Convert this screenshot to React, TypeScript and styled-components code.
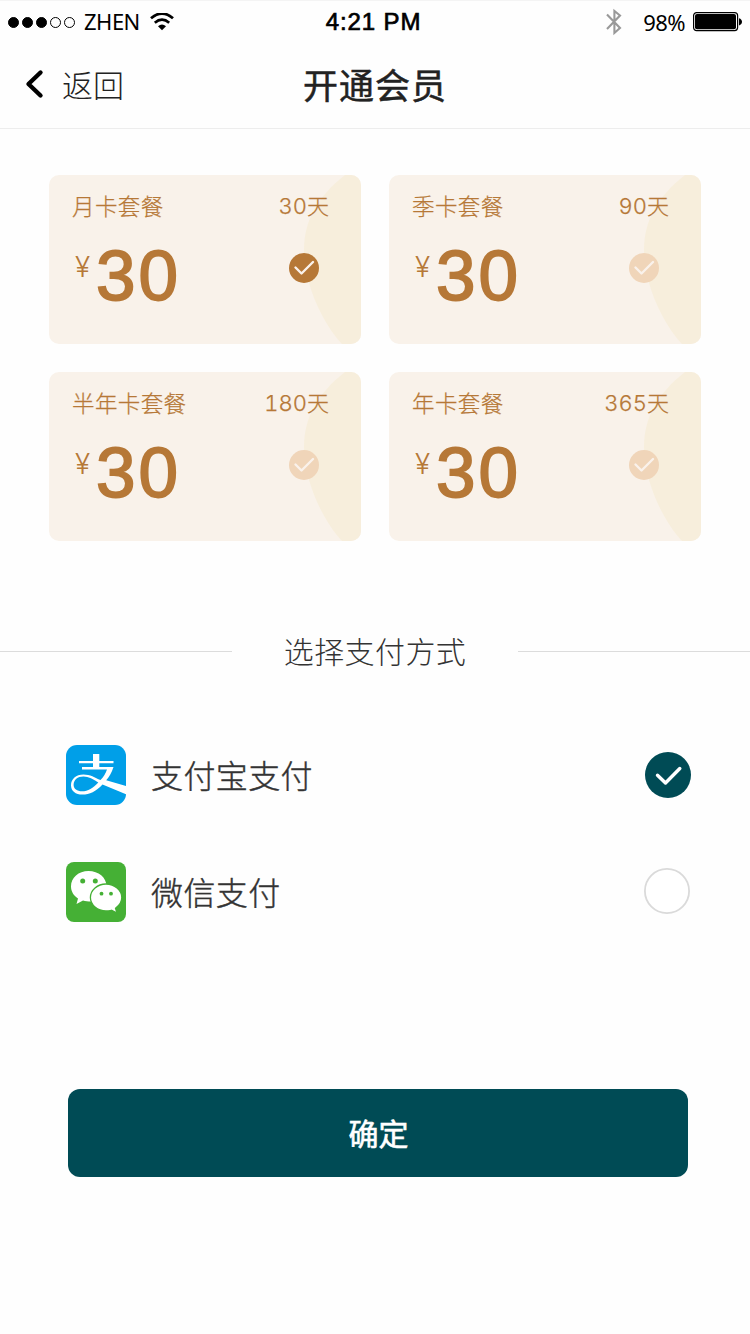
import React, { useState } from "react";
import styled, { createGlobalStyle } from "styled-components";

const CJK = '"Noto Sans CJK SC", sans-serif';

const GlobalStyle = createGlobalStyle`
  * { box-sizing: border-box; }
  body { margin: 0; background: #fefefe; font-family: ${CJK}; }
  button { font: inherit; border: 0; padding: 0; background: none; cursor: pointer; text-align: left; }
`;

const Screen = styled.div`
  width: 750px;
  height: 1334px;
  overflow: hidden;
  border-top: 1px solid #f4f4f4;
`;

const StatusBar = styled.div`
  display: grid;
  grid-template-columns: 1fr auto 1fr;
  align-items: center;
  height: 42px;
  padding: 0 8px;
  color: #000;
`;

const StatusGroup = styled.div<{ $end?: boolean }>`
  display: flex;
  align-items: center;
  justify-content: ${(p) => (p.$end ? "flex-end" : "flex-start")};
`;

const Signal = styled.div`
  display: flex;
  gap: 3px;
  margin-right: 9px;
`;

const SignalDot = styled.i<{ $on: boolean }>`
  width: 11px;
  height: 11px;
  border-radius: 50%;
  border: 1px solid #000;
  background: ${(p) => (p.$on ? "#000" : "transparent")};
`;

const Carrier = styled.span`
  margin-right: 10px;
  padding-bottom: 2px;
  font: 400 22px/28px "Noto Sans", sans-serif;
  letter-spacing: -0.5px;
`;

const BatteryLevel = styled.span`
  margin: 0 8px 0 21px;
  padding-bottom: 1px;
  font: 400 22px/28px "Noto Sans", sans-serif;
  letter-spacing: -0.6px;
`;

const Clock = styled.span`
  font: 400 24px/28px "Liberation Sans", Arial, sans-serif;
  letter-spacing: 0.9px;
  margin-right: 3px;
  -webkit-text-stroke: 0.7px #000;
`;

const NavBar = styled.header`
  display: grid;
  grid-template-columns: 1fr auto 1fr;
  align-items: center;
  height: 86px;
  padding-bottom: 3px;
  border-bottom: 1px solid #ededed;
`;

const BackButton = styled.button`
  display: flex;
  align-items: center;
  gap: 18px;
  padding-left: 25px;
  color: #222;
  font-size: 31px;
  font-weight: 300;
  line-height: 40px;
`;

const NavTitle = styled.h1`
  margin: 0;
  font-size: 35px;
  font-weight: 400;
  line-height: 44px;
  letter-spacing: 1px;
  color: #222;
  -webkit-text-stroke: 0.5px #222;
`;

const PlanGrid = styled.section`
  display: grid;
  grid-template-columns: 312px 312px;
  gap: 28px;
  padding: 46px 49px 0;
`;

const PlanCard = styled.button`
  position: relative;
  display: flex;
  flex-direction: column;
  height: 169px;
  padding: 17px 31px 0 23px;
  border-radius: 10px;
  overflow: hidden;
  background: #f9f2ea;
  color: #b67837;
`;

const PlanGlow = styled.svg`
  position: absolute;
  top: 0;
  right: 0;
`;

const PlanRow = styled.div`
  position: relative;
  display: flex;
  justify-content: space-between;
  width: 100%;
`;

const PlanLabel = styled.span`
  font-family: ${CJK};
  font-size: 22.5px;
  font-weight: 300;
  line-height: 26px;
  letter-spacing: 0.4px;
  -webkit-text-stroke: 0.25px #b67837;
`;

const PlanDays = styled(PlanLabel)`
  margin-right: 1px;
  font-family: Inter, ${CJK};
  font-size: 22px;
  font-feature-settings: "tnum";
  line-height: 28px;
  letter-spacing: 0;
`;

const Price = styled.div`
  display: flex;
  align-items: flex-start;
  margin-top: 10px;
`;

const Currency = styled.span`
  width: 24px;
  padding: 19px 0 0 3px;
  font-family: Inter, sans-serif;
  font-size: 28px;
  font-weight: 300;
  line-height: 36px;
`;

const Amount = styled.span`
  font-family: "Liberation Sans", Arial, sans-serif;
  font-size: 71px;
  line-height: 91px;
  letter-spacing: 3px;
  -webkit-text-stroke: 1.8px #b67837;
`;

const PlanMark = styled.svg<{ $active: boolean }>`
  margin: 33px 11px 0 0;
  circle { fill: ${(p) => (p.$active ? "#b67837" : "#f0d5b9")}; }
`;

const SectionTitle = styled.div`
  display: flex;
  align-items: center;
  justify-content: space-between;
  margin-top: 88px;
  height: 44px;
  color: #333;
  font-size: 30px;
  font-weight: 300;
  letter-spacing: 0.4px;
  &::before, &::after {
    content: "";
    width: 232px;
    height: 1px;
    background: #dcdcdc;
  }
`;

const SectionLabel = styled.span`
  padding-bottom: 3px;
`;

const Methods = styled.section`
  display: flex;
  flex-direction: column;
  gap: 57px;
  padding: 72px 59px 0 66px;
`;

const MethodRow = styled.button`
  display: flex;
  align-items: center;
  height: 60px;
`;

const MethodName = styled.span`
  flex: 1;
  margin-left: 25px;
  padding-bottom: 3px;
  font-size: 32px;
  font-weight: 300;
  line-height: 44px;
  letter-spacing: 0.4px;
  color: #333;
  -webkit-text-stroke: 0.4px #333;
`;

const RadioSlot = styled.span<{ $on: boolean }>`
  display: flex;
  padding: ${(p) => (p.$on ? "0" : "0 1px 2px 0")};
`;

const Confirm = styled.button`
  display: block;
  width: 620px;
  height: 88px;
  margin: 167px 0 0 68px;
  padding: 0 0 3px 1px;
  border-radius: 12px;
  background: #004b55;
  color: #fff;
  font-size: 30px;
  font-weight: 400;
  text-align: center;
  -webkit-text-stroke: 0.6px #fff;
`;

const WifiIcon = () => (
  <svg width="24" height="19" viewBox="0 0 24 19">
    <path d="M1 5.300Q12-4.200 23 5.300" fill="none" stroke="#000" strokeWidth="2.8" />
    <path d="M4.800 9.800Q12 3.600 19.200 9.800" fill="none" stroke="#000" strokeWidth="2.7" />
    <path d="M8 13.200Q12 10 16 13.200L12 17.200Z" />
  </svg>
);

const BluetoothIcon = () => (
  <svg width="16" height="28" viewBox="0 0 16 28">
    <path d="M1 6.500L14 20L8.400 25V3L14 7.500L1 21" fill="none" stroke="#999" strokeWidth="2.100" />
  </svg>
);

const BatteryIcon = () => (
  <svg width="49" height="20" viewBox="0 0 49 20">
    <rect x="0.6" y="0.6" width="44" height="18" rx="3" fill="none" stroke="#000" strokeWidth="1.2" />
    <rect x="2" y="2" width="41" height="15.2" rx="2" />
    <path d="M46 6.2q3 1 3 3.6t-3 3.6z" />
  </svg>
);

const BackIcon = () => (
  <svg width="19" height="30" viewBox="0 0 19 30">
    <path d="M15.500 3.500L3.500 15L15.500 26.500" fill="none" stroke="#000" strokeWidth="4.400" strokeLinecap="round" strokeLinejoin="round" />
  </svg>
);

const AlipayLogo = () => (
  <svg width="60" height="60" viewBox="0 0 60 60">
    <rect width="60" height="60" rx="11" fill="#009fe8" />
    <path d="M27 9h6.300v7H47.500v2.200H33.300V22H47.500C45.500 28 43 32 40.200 35.200L60 41V49.300L36.500 39.500C30 46.500 23.500 49.600 16.500 49.600C9.500 49.600 5 46 5 40.200C5 34 10 29.400 17.500 29.400C24 29.400 29 32.500 34.500 35C37.500 32 39.500 28.500 41 24.500H16V22H27V18.200H13V16H27Z" fill="#fff" />
    <path d="M32.300 37.500C27.500 34.500 22.500 31.600 17.500 31.600C11.500 31.600 7.600 35 7.600 39.800C7.600 44 11 46.300 16 46.300C22 46.300 27 43 32.300 37.500Z" fill="#009fe8" />
  </svg>
);

const WechatLogo = () => (
  <svg width="60" height="60" viewBox="0 0 60 60">
    <rect width="60" height="60" rx="8" fill="#45b035" />
    <path d="M22.500 9C12.500 9 5 15.800 5 24.300C5 29.500 7.500 33.500 12 36.500L10.500 42L17 38.500C19.500 39.300 22 39.500 25 39.500C34 39 40.500 32 40.500 24.300C40.500 15.500 32.500 9 22.500 9Z" fill="#fff" />
    <path d="M40 22C31.500 22 24.400 28 24.400 35.600C24.400 43 31.500 49 40 49C42 49 44 48.700 45.500 48.300L51 51L49.500 46.200C53.500 43.500 55.800 40 55.800 35.600C55.800 28 48.500 22 40 22Z" fill="#fff" stroke="#45b035" strokeWidth="1.300" />
    <g fill="#45b035">
      <circle cx="16.700" cy="19" r="2.500" />
      <circle cx="29.300" cy="19" r="2.500" />
      <circle cx="35.500" cy="31.700" r="1.900" />
      <circle cx="45" cy="31.700" r="1.900" />
    </g>
  </svg>
);

const Radio = ({ on }: { on: boolean }) => (
  <svg width="46" height="46" viewBox="0 0 46 46">
    {on ? (
      <>
        <circle cx="23" cy="23" r="23" fill="#004b55" />
        <path d="M12.500 23.200L20.500 31L34.800 16.500" fill="none" stroke="#fff" strokeWidth="3.400" strokeLinecap="round" strokeLinejoin="round" />
      </>
    ) : (
      <circle cx="23" cy="23" r="22.100" fill="#fff" stroke="#dadada" strokeWidth="1.800" />
    )}
  </svg>
);

const plans = [
  { name: "月卡套餐", days: "30天", price: 30 },
  { name: "季卡套餐", days: "90天", price: 30 },
  { name: "半年卡套餐", days: "180天", price: 30 },
  { name: "年卡套餐", days: "365天", price: 30 },
];

const methods = [
  { name: "支付宝支付", Logo: AlipayLogo },
  { name: "微信支付", Logo: WechatLogo },
];

export default function App() {
  const [plan, setPlan] = useState(0);
  const [method, setMethod] = useState(0);

  return (
    <Screen>
      <GlobalStyle />
      <StatusBar>
        <StatusGroup>
          <Signal>
            {[true, true, true, false, false].map((on, i) => (
              <SignalDot key={i} $on={on} />
            ))}
          </Signal>
          <Carrier>ZHEN</Carrier>
          <WifiIcon />
        </StatusGroup>
        <Clock>4:21 PM</Clock>
        <StatusGroup $end>
          <BluetoothIcon />
          <BatteryLevel>98%</BatteryLevel>
          <BatteryIcon />
        </StatusGroup>
      </StatusBar>

      <NavBar>
        <BackButton>
          <BackIcon />
          返回
        </BackButton>
        <NavTitle>开通会员</NavTitle>
      </NavBar>

      <PlanGrid>
        {plans.map((p, i) => (
          <PlanCard key={p.name} onClick={() => setPlan(i)}>
            <PlanGlow width="58" height="169" viewBox="0 0 58 169">
              <path d="M42 0C14 22 1 46 1 75C1 109 20 149 39 169H58V0Z" fill="#f7eedc" />
            </PlanGlow>
            <PlanRow>
              <PlanLabel>{p.name}</PlanLabel>
              <PlanDays>{p.days}</PlanDays>
            </PlanRow>
            <PlanRow>
              <Price>
                <Currency>¥</Currency>
                <Amount>{p.price}</Amount>
              </Price>
              <PlanMark $active={plan === i} width="30" height="30" viewBox="0 0 30 30">
                <circle cx="15" cy="15" r="15" />
                <path d="M6.500 14.500L12.500 20.500L24 9" fill="none" stroke="#faf2eb" strokeWidth="2.400" strokeLinecap="round" strokeLinejoin="round" />
              </PlanMark>
            </PlanRow>
          </PlanCard>
        ))}
      </PlanGrid>

      <SectionTitle>
        <SectionLabel>选择支付方式</SectionLabel>
      </SectionTitle>

      <Methods>
        {methods.map(({ name, Logo }, i) => (
          <MethodRow key={name} onClick={() => setMethod(i)}>
            <Logo />
            <MethodName>{name}</MethodName>
            <RadioSlot $on={method === i}>
              <Radio on={method === i} />
            </RadioSlot>
          </MethodRow>
        ))}
      </Methods>

      <Confirm>确定</Confirm>
    </Screen>
  );
}
